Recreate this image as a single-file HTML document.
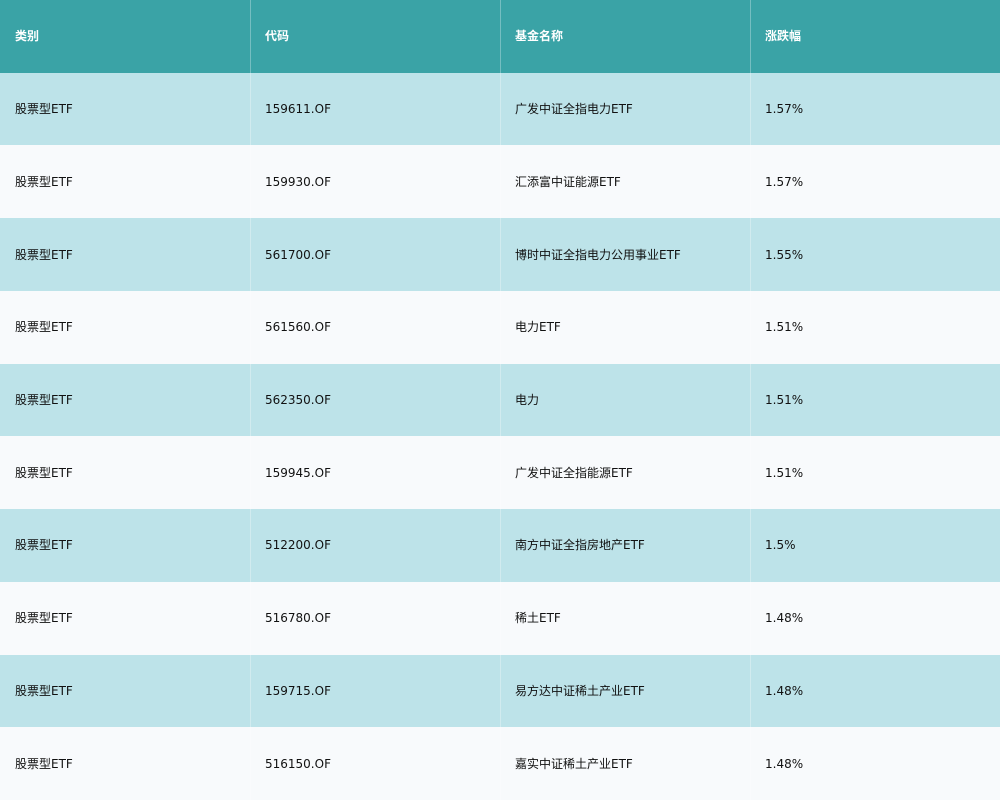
<!DOCTYPE html>
<html><head><meta charset="utf-8"><style>
html,body{margin:0;padding:0;width:1000px;height:800px;overflow:hidden;background:#f8fafc}
.g{display:grid;grid-template-columns:250px 250px 250px 250px;grid-template-rows:repeat(11,1fr);width:1000px;height:800px;font-family:"DejaVu Sans","Noto Sans CJK SC",sans-serif;font-size:12px;color:#111}
.g div{position:relative;box-sizing:border-box}
.g div span{position:absolute;left:15px;top:50%;line-height:14px;height:14px;margin-top:-7px;white-space:nowrap}
.g div:not(:nth-child(4n+1))::before{content:"";position:absolute;left:0;top:0;bottom:0;width:1px;background:rgba(255,255,255,0.3)}
.h{background:#3aa3a6;color:#fff;font-weight:bold}
.h span{margin-top:-7px!important}
.o{background:#bde3e9}
.e{background:#f8fafc}
</style></head><body><div class="g">
<div class="h"><span>类别</span></div><div class="h"><span>代码</span></div><div class="h"><span>基金名称</span></div><div class="h"><span>涨跌幅</span></div>
<div class="o"><span>股票型ETF</span></div><div class="o"><span>159611.OF</span></div><div class="o"><span>广发中证全指电力ETF</span></div><div class="o"><span>1.57%</span></div>
<div class="e"><span>股票型ETF</span></div><div class="e"><span>159930.OF</span></div><div class="e"><span>汇添富中证能源ETF</span></div><div class="e"><span>1.57%</span></div>
<div class="o"><span>股票型ETF</span></div><div class="o"><span>561700.OF</span></div><div class="o"><span>博时中证全指电力公用事业ETF</span></div><div class="o"><span>1.55%</span></div>
<div class="e"><span>股票型ETF</span></div><div class="e"><span>561560.OF</span></div><div class="e"><span>电力ETF</span></div><div class="e"><span>1.51%</span></div>
<div class="o"><span>股票型ETF</span></div><div class="o"><span>562350.OF</span></div><div class="o"><span>电力</span></div><div class="o"><span>1.51%</span></div>
<div class="e"><span>股票型ETF</span></div><div class="e"><span>159945.OF</span></div><div class="e"><span>广发中证全指能源ETF</span></div><div class="e"><span>1.51%</span></div>
<div class="o"><span>股票型ETF</span></div><div class="o"><span>512200.OF</span></div><div class="o"><span>南方中证全指房地产ETF</span></div><div class="o"><span>1.5%</span></div>
<div class="e"><span>股票型ETF</span></div><div class="e"><span>516780.OF</span></div><div class="e"><span>稀土ETF</span></div><div class="e"><span>1.48%</span></div>
<div class="o"><span>股票型ETF</span></div><div class="o"><span>159715.OF</span></div><div class="o"><span>易方达中证稀土产业ETF</span></div><div class="o"><span>1.48%</span></div>
<div class="e"><span>股票型ETF</span></div><div class="e"><span>516150.OF</span></div><div class="e"><span>嘉实中证稀土产业ETF</span></div><div class="e"><span>1.48%</span></div>
</div></body></html>
